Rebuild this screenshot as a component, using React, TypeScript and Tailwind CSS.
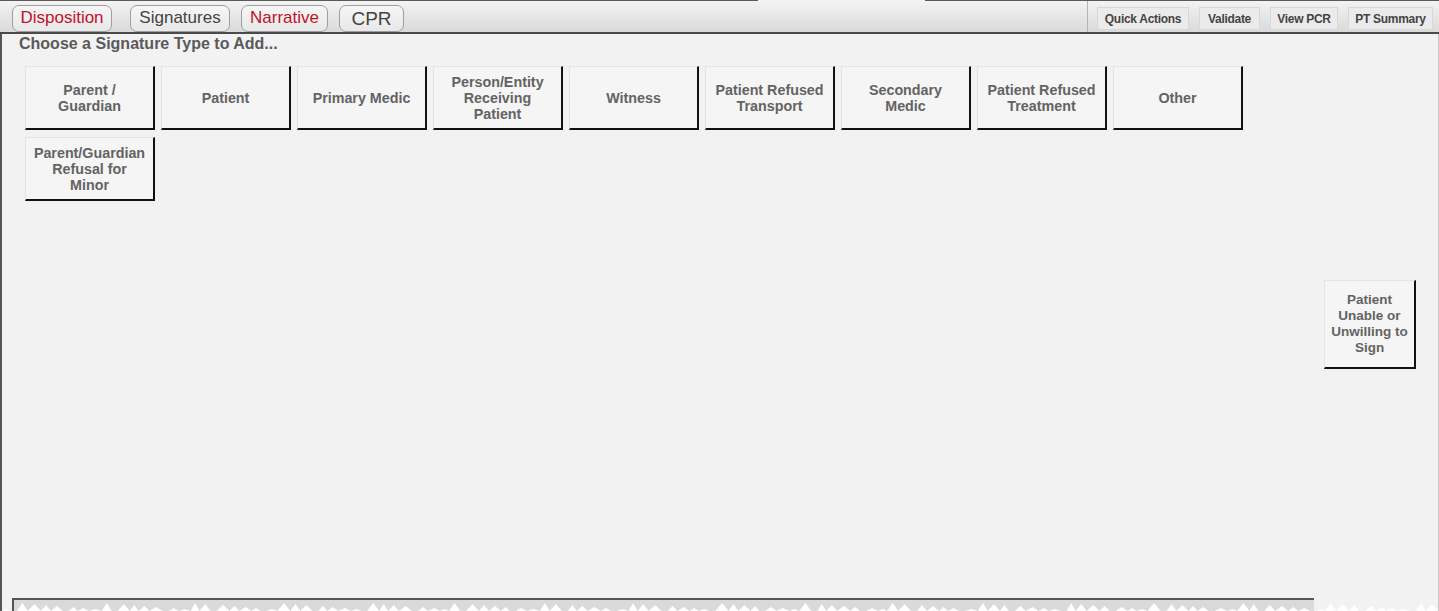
import React from 'react';

const tabs = [
  { label: 'Disposition', red: true, w: 'w-[100px]' },
  { label: 'Signatures', red: false, w: 'w-[100px]' },
  { label: 'Narrative', red: true, w: 'w-[87px]' },
  { label: 'CPR', red: false, w: 'w-[65px]', big: true },
];

const actions = [
  { label: 'Quick Actions', w: 'w-[92px]' },
  { label: 'Validate', w: 'w-[61px]' },
  { label: 'View PCR', w: 'w-[68px]' },
  { label: 'PT Summary', w: 'w-[85px]' },
];

const sigTypes = [
  'Parent / Guardian',
  'Patient',
  'Primary Medic',
  'Person/Entity Receiving Patient',
  'Witness',
  'Patient Refused Transport',
  'Secondary Medic',
  'Patient Refused Treatment',
  'Other',
  'Parent/Guardian Refusal for Minor',
];

function SigButton({ label, className }: { label: string; className: string }) {
  return (
    <button
      className={`flex items-center justify-center bg-[#f5f5f5] border-t border-l border-t-[#e4e4e4] border-l-[#e4e4e4] border-r-2 border-b-2 border-r-[#111] border-b-[#111] text-center leading-[16px] font-bold text-[#636363] ${className}`}
    >
      {label}
    </button>
  );
}

// torn paper edge along the bottom
function TornEdge() {
  const pts: string[] = [];
  let x = 0;
  let i = 0;
  while (x < 1440) {
    const w = 9 + ((i * 7) % 5);
    const h = 2 + ((i * 13) % 7);
    pts.push(`${x},9 ${x + w / 2},${9 - h} ${x + w},9`);
    x += w + ((i * 11) % 4 === 0 ? 6 : 0);
    i++;
  }
  return (
    <svg className="block w-full h-[9px]" viewBox="0 0 1439 9" preserveAspectRatio="none">
      {pts.map((p, k) => (
        <polygon key={k} points={p} fill="#ffffff" />
      ))}
    </svg>
  );
}

export default function App() {
  return (
    <div className="w-[1439px] h-[611px] overflow-hidden flex flex-col bg-[#f2f2f3] font-['Liberation_Sans',Arial,sans-serif]">
      <div className="flex h-px shrink-0">
        <div className="w-[758px] bg-[#5a5a5a]" />
        <div className="w-[167px] bg-[#f2f2f2]" />
        <div className="flex-1 bg-[#5a5a5a]" />
      </div>
      <header className="h-[33px] shrink-0 flex items-stretch bg-gradient-to-b from-[#f3f3f3] to-[#dadada] border-b-2 border-[#4a4a4a]">
        <div className="flex-1 flex items-start pl-[12px] pt-[4px]">
          {tabs.map((t, i) => (
            <div
              key={t.label}
              className={`${t.w} h-[27px] flex items-center justify-center rounded-[7px] border border-[#9e9e9e] bg-gradient-to-b from-[#f6f6f6] to-[#e8e8e8] ${
                t.red ? 'text-[#c4102a]' : 'text-[#444]'
              } ${t.big ? 'text-[19px] pt-[1px]' : 'text-[17px] pb-[1px]'} ${
                i === 1 ? 'ml-[18px]' : i === 0 ? '' : 'ml-[11px]'
              }`}
            >
              {t.label}
            </div>
          ))}
        </div>
        <div className="flex items-start gap-[10px] border-l border-[#b5b5b5] pl-[9px] pr-[6px] pt-[6px]">
          {actions.map((a) => (
            <div
              key={a.label}
              className={`${a.w} h-[23px] flex items-center justify-center border border-[#d8d8d8] bg-[#ebebeb] text-[12px] font-bold tracking-[-0.3px] text-[#444] font-['Liberation_Sans_Narrow','Liberation_Sans',Arial,sans-serif]`}
            >
              {a.label}
            </div>
          ))}
        </div>
      </header>

      <main className="flex-1 flex flex-col border-l-2 border-[#555] border-r border-r-[#c8c8c8] min-h-0">
        <div className="flex-1 flex min-h-0">
          <div className="flex-1 pl-[17px]">
            <h2 className="text-[16px] font-bold text-[#5a5a5a] leading-[18px] pt-[1px]">
              Choose a Signature Type to Add...
            </h2>
            <div className="mt-[13px] pl-[6px] flex flex-wrap gap-x-[6px] gap-y-[7px] w-[1240px]">
              {sigTypes.map((s) => (
                <SigButton key={s} label={s} className="w-[130px] h-[64px] px-[6px] text-[14.3px]" />
              ))}
            </div>
          </div>
          <div className="w-[114px] flex flex-col pt-[246px]">
            <SigButton
              label="Patient Unable or Unwilling to Sign"
              className="w-[92px] h-[89px] px-[2px] text-[13.5px]"
            />
          </div>
        </div>
        <div className="h-[13px] shrink-0 relative">
          <div className="ml-[10px] w-[1302px] h-[13px] bg-[#dadada] border-t-2 border-l-2 border-[#555]" />
          <div className="absolute left-0 right-0 bottom-0">
            <TornEdge />
          </div>
        </div>
      </main>
    </div>
  );
}
